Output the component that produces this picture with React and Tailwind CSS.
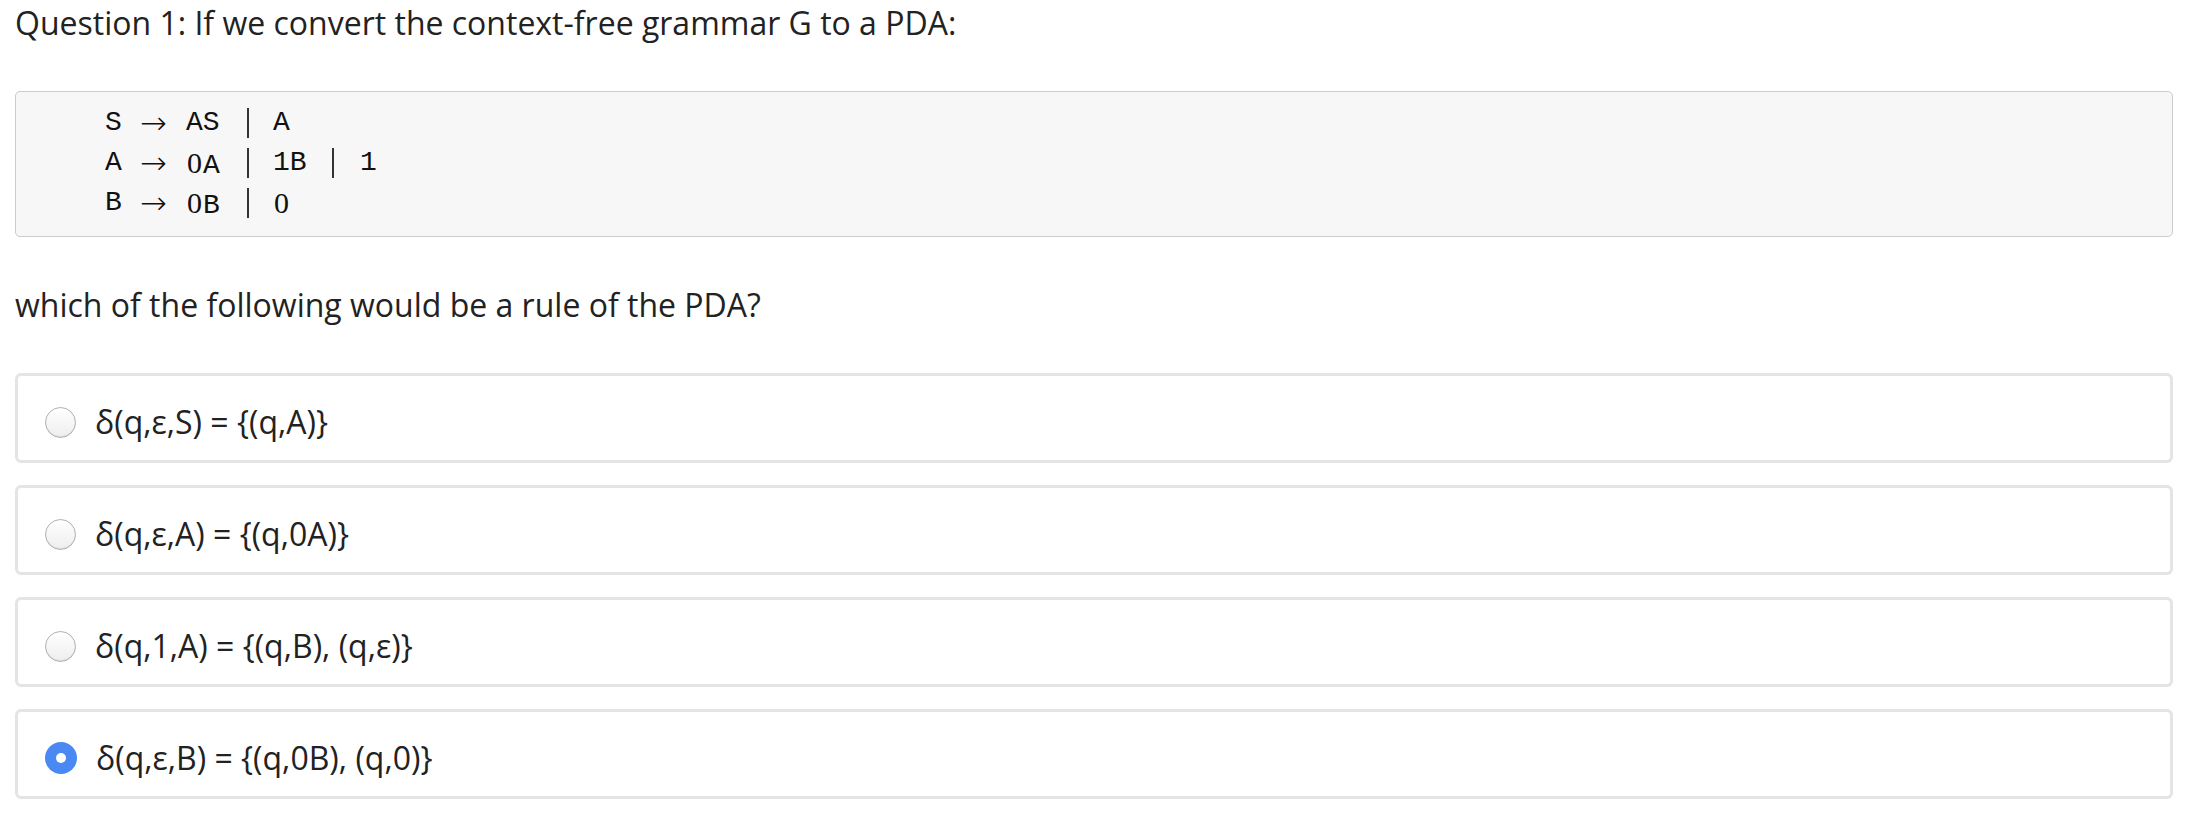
import { useState } from 'react';

const rows = [
  { lhs: 'S', parts: ['AS', 'A'] },
  { lhs: 'A', parts: ['0A', '1B', '1'] },
  { lhs: 'B', parts: ['0B', '0'] },
];

const options = [
  'δ(q,ε,S) = {(q,A)}',
  'δ(q,ε,A) = {(q,0A)}',
  'δ(q,1,A) = {(q,B), (q,ε)}',
  'δ(q,ε,B) = {(q,0B), (q,0)}',
];

// widths of the rhs cells, so the bars line up like the mathjax array
const cellWidths = ['w-[62px]', 'w-[83px]', 'w-[60px]'];
const cellPads = ['pl-[1px]', 'pl-[24px]', 'pl-[26px]'];

// liberation mono draws a dotted zero, the original has a plain one
function Mono({ text }) {
  return text.split('').map((c, i) =>
    c === '0' ? (
      <span key={i} className="inline-block w-[17px] text-center text-[30px]" style={{ fontFamily: '"Liberation Serif", serif' }}>0</span>
    ) : (
      <span key={i}>{c}</span>
    )
  );
}

function Radio({ checked }) {
  if (checked) {
    return (
      <span className="flex items-center justify-center w-[32px] h-[32px] rounded-full bg-[#4a89f3] shrink-0">
        <span className="w-[10px] h-[10px] rounded-full bg-white" />
      </span>
    );
  }
  return (
    <span className="w-[31px] h-[31px] rounded-full border border-[#b0b0b0] bg-gradient-to-b from-white to-[#eeeeee] shadow-[inset_0_-1px_1px_rgba(0,0,0,0.08)] shrink-0" />
  );
}

export default function App() {
  const [picked, setPicked] = useState(3);

  return (
    <div className="w-[2190px] h-[814px] bg-white px-[15px] text-[#222]" style={{ fontFamily: '"Open Sans", sans-serif' }}>
      <p className="text-[32px] leading-[45px]">Question 1: If we convert the context-free grammar G to a PDA:</p>

      <div className="mt-[46px] mr-[2px] border border-[#cccccc] rounded-[5px] bg-[#f7f7f7] pt-[11px] pb-[13px] pl-[89px]">
        {rows.map((r) => (
          <div key={r.lhs} className="flex items-center h-[40px] text-[28px] text-[#111]" style={{ fontFamily: '"Liberation Mono", monospace' }}>
            <span className="w-[35px]">{r.lhs}</span>
            <span className="w-[45px] text-[32px] font-extralight leading-none" style={{ fontFamily: '"DejaVu Sans", serif' }}>→</span>
            {r.parts.map((p, i) => (
              <div key={i} className="flex items-center">
                {i > 0 && <span className="w-[2px] h-[30px] bg-[#333]" />}
                <span className={`${cellWidths[i]} ${cellPads[i]}`}>
                  <Mono text={p} />
                </span>
              </div>
            ))}
          </div>
        ))}
      </div>

      <p className="mt-[45px] text-[32px] leading-[45px]">which of the following would be a rule of the PDA?</p>

      <div className="mt-[46px] mr-[2px] flex flex-col gap-[22px]">
        {options.map((o, i) => (
          <label
            key={i}
            onClick={() => setPicked(i)}
            className="flex items-center gap-[19px] h-[90px] pt-[8px] pl-[27px] border-[3px] border-[#e4e4e4] rounded-[6px] bg-white cursor-pointer"
          >
            <Radio checked={picked === i} />
            <span className="text-[32px] leading-none">{o}</span>
          </label>
        ))}
      </div>
    </div>
  );
}
